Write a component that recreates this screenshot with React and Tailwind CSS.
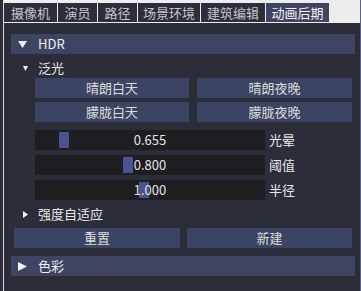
const tabs = [
  { label: '摄像机', w: 'w-[53px]' },
  { label: '演员', w: 'w-[39px]' },
  { label: '路径', w: 'w-[39px]' },
  { label: '场景环境', w: 'w-[62px]' },
  { label: '建筑编辑', w: 'w-[64px]' },
  { label: '动画后期', w: 'w-[63px]', active: true },
];

const sliders = [
  { value: '0.655', left: 24, label: '光晕' },
  { value: '0.800', left: 88, label: '阈值' },
  { value: '1.000', left: 104, label: '半径' },
];

function Tri({ dir = 'down', size = 'big' }) {
  const big = size === 'big';
  const w = big ? 9 : 5;
  const h = big ? 9 : 7;
  const pts = dir === 'down' ? `0,1 ${w},1 ${w / 2},${h - 1}` : `0,0 ${w},${h / 2} 0,${h}`;
  return (
    <svg width={w} height={h} viewBox={`0 0 ${w} ${h}`} className="shrink-0">
      <polygon points={pts} fill="#f2f2f2" />
    </svg>
  );
}

function Header({ title, open }) {
  return (
    <div className="h-[20px] bg-[#3d4563] flex items-center pl-[7px] text-[13px] text-[#f0f0f0]">
      <Tri dir={open ? 'down' : 'right'} />
      <span className="ml-[11px]">{title}</span>
    </div>
  );
}

function SubHeader({ title, open }) {
  return (
    <div className="h-[20px] flex items-center pl-[12px] text-[13px] text-[#e8e8e8]">
      <Tri dir={open ? 'down' : 'right'} size="small" />
      <span className="ml-[10px]">{title}</span>
    </div>
  );
}

function Btn({ children, className = '' }) {
  return (
    <div className={`h-[20px] bg-[#3b4462] flex items-center justify-center text-[13px] text-[#dcdcdc] ${className}`}>
      {children}
    </div>
  );
}

export default function App() {
  return (
    <div
      className="w-[361px] h-[291px] bg-[#2b2d39] pl-[3px] overflow-hidden"
      style={{ fontFamily: '"Noto Sans CJK SC", "Noto Sans", sans-serif' }}
    >
      <div className="h-full border-l border-[#d9d9dc] border-r border-r-[#5b5f98] flex flex-col">
        <div className="h-[23px] bg-[#ededed] pt-[3px] pb-px flex gap-px shrink-0">
          {tabs.map((t) => (
            <div
              key={t.label}
              className={`${t.w} h-[19px] flex items-center justify-center text-[13px] ${
                t.active ? 'bg-[#3e4562] text-[#f4f4f4]' : 'bg-[#2c2e3b] text-[#c4c4c8]'
              }`}
            >
              {t.label}
            </div>
          ))}
        </div>

        <div className="pt-[11px] pl-[7px] pr-[5px]">
          <Header title="HDR" open />
          <div className="mt-[4px]">
            <SubHeader title="泛光" open />
          </div>
          <div className="pl-[24px] pr-[3px] flex flex-col gap-[4px]">
            <div className="flex gap-[8px]">
              <Btn className="w-[154px]">晴朗白天</Btn>
              <Btn className="flex-1">晴朗夜晚</Btn>
            </div>
            <div className="flex gap-[8px]">
              <Btn className="w-[154px]">朦胧白天</Btn>
              <Btn className="flex-1">朦胧夜晚</Btn>
            </div>
          </div>
          <div className="pl-[24px] mt-[8px] flex flex-col gap-[5px]">
            {sliders.map((s) => (
              <div key={s.label} className="flex items-center">
                <div className="relative w-[230px] h-[20px] bg-[#1e1e20]">
                  <div
                    className="absolute top-[2px] bottom-[2px] w-[10px] bg-[#4a5491]"
                    style={{ left: s.left }}
                  />
                  <div className="relative h-full flex items-center justify-center text-[13px] text-[#e4e4e4]">
                    {s.value}
                  </div>
                </div>
                <span className="ml-[4px] text-[13px] text-[#e8e8e8]">{s.label}</span>
              </div>
            ))}
          </div>
          <div className="mt-[4px]">
            <SubHeader title="强度自适应" />
          </div>
          <div className="mt-[4px] pl-[3px] pr-[3px] flex gap-[7px]">
            <Btn className="w-[166px]">重置</Btn>
            <Btn className="flex-1">新建</Btn>
          </div>
          <div className="mt-[8px]">
            <Header title="色彩" />
          </div>
        </div>
      </div>
    </div>
  );
}
